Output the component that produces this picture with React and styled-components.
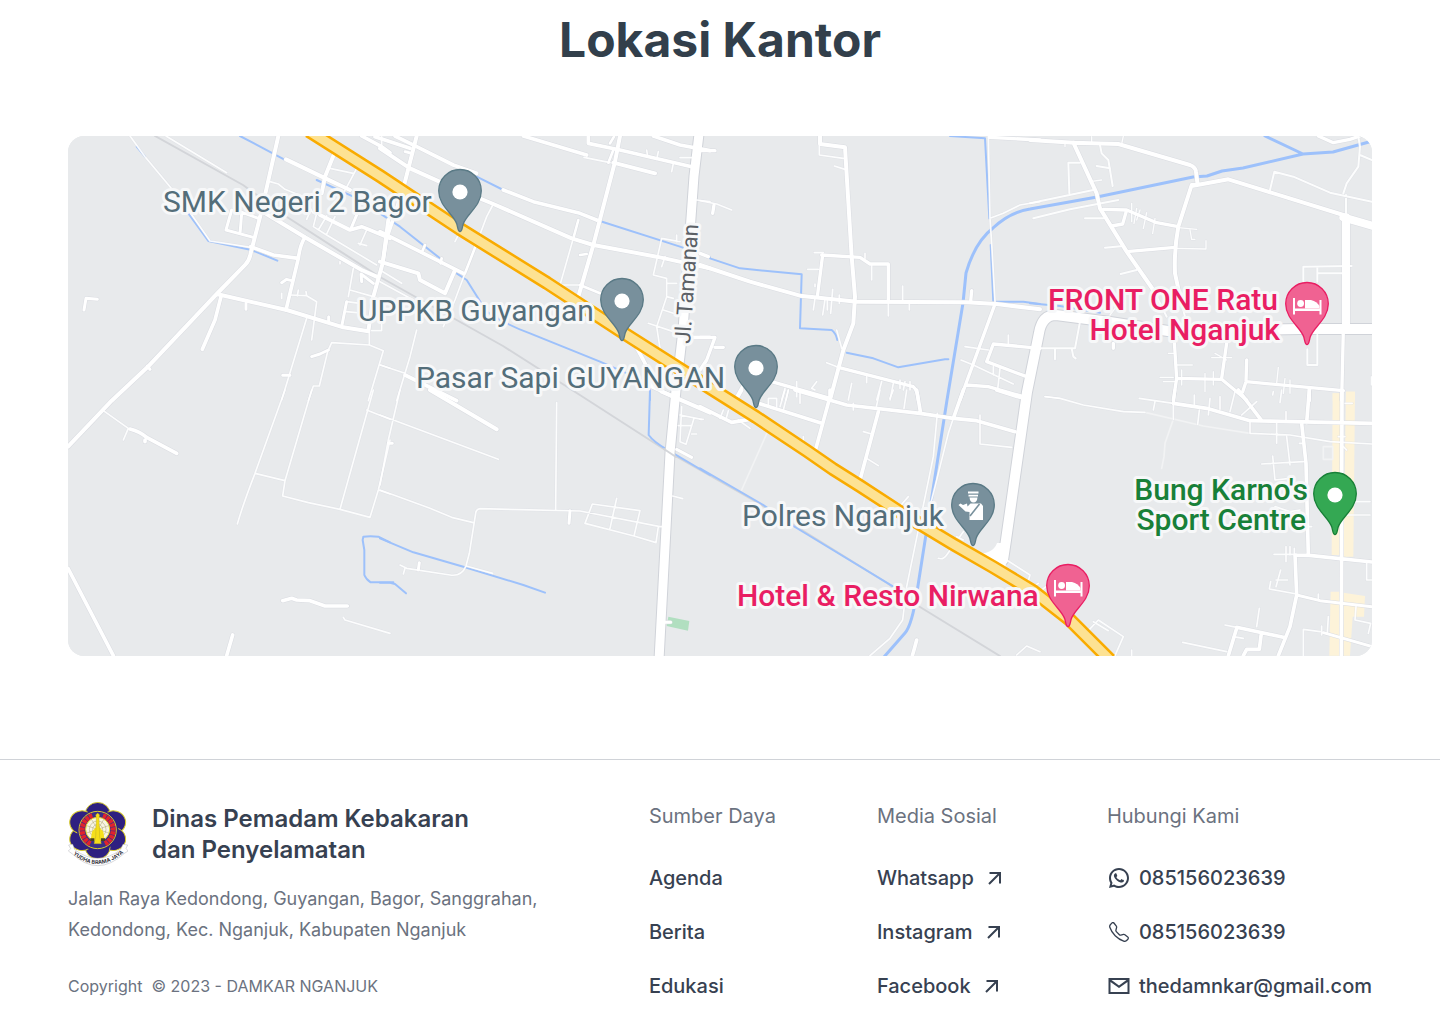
import React from "react";
import styled, { createGlobalStyle } from "styled-components";
import { RiWhatsappLine } from "react-icons/ri";
import { BsTelephone } from "react-icons/bs";

const GlobalStyle = createGlobalStyle`
  *, *::before, *::after { box-sizing: border-box; }
  body {
    margin: 0;
    background: #fff;
    color: #374151;
    font-family: Inter, "Liberation Sans", sans-serif;
  }
`;

const Office = styled.main`
  padding: 10px 68px 103px;
  @media (max-width: 800px) { padding: 10px 24px 48px; }
`;

const PageTitle = styled.h1`
  margin: 0 0 66px;
  font-size: 48px;
  line-height: 60px;
  font-weight: 700;
  text-align: center;
  color: #323f4b;
`;

const MapFrame = styled.figure`
  margin: 0;
  border-radius: 16px;
  overflow: hidden;
  background: #e8eaec;
`;

const MapDrawing = styled.svg`
  display: block;
  width: 100%;
  height: auto;
`;

const PlaceName = styled.text`
  font-family: Roboto, "Liberation Sans", sans-serif;
  font-size: ${(p) => p.$size || 30}px;
  font-weight: ${(p) => p.$weight || 400};
  fill: ${(p) => p.$color};
  stroke: #f7f8f9;
  stroke-width: 6px;
  stroke-linejoin: round;
  paint-order: stroke;
`;

const Footer = styled.footer`
  border-top: 1px solid #d0d3d8;
  padding: 40px 68px 32px;
  display: grid;
  grid-template-columns: minmax(0, 1fr) 228px 230px max-content;
  @media (max-width: 1100px) {
    grid-template-columns: repeat(2, minmax(0, 1fr));
    gap: 40px;
  }
  @media (max-width: 800px) { padding: 40px 24px 32px; }
`;

const About = styled.div`
  display: flex;
  flex-direction: column;
`;

const Brand = styled.div`
  display: flex;
  align-items: center;
  gap: 24px;
  margin-bottom: 15px;
`;

const BrandName = styled.h2`
  margin: 0;
  font-size: 24px;
  line-height: 31px;
  font-weight: 600;
`;

const Address = styled.address`
  font-style: normal;
  font-size: 18px;
  line-height: 31px;
  color: #6b7280;
  margin-bottom: 29px;
`;

const Copyright = styled.small`
  font-size: 16px;
  line-height: 24px;
  color: #6b7280;
  white-space: pre-wrap;
`;

const Column = styled.nav`
  display: flex;
  flex-direction: column;
`;

const ColumnTitle = styled.h3`
  margin: 0 0 30px;
  font-size: 20px;
  line-height: 32px;
  font-weight: 400;
  color: #6b7280;
`;

const LinkList = styled.ul`
  list-style: none;
  margin: 0;
  padding: 0;
  display: flex;
  flex-direction: column;
  gap: 22px;
`;

const FooterLink = styled.a`
  display: inline-flex;
  align-items: center;
  gap: 8px;
  font-size: 20px;
  line-height: 32px;
  font-weight: 500;
  color: inherit;
  text-decoration: none;
  svg { flex: none; }
`;

const IconBox = styled.span`
  display: inline-flex;
  align-items: center;
  justify-content: center;
  width: 24px;
  height: 24px;
`;

/* Map sheets: each is surveyed in thirds of a map unit from its own corner. */
const SHEETS = [
  {
    x: 60, y: 130,
    water: ["M385 250L445 333L575 360L652 392", "M540 18L672 88", "M770 150L880 200", "M230 50L255 80"],
    roads: [
      [12, "M655 18L600 262L572 370Q568 392 556 404L470 492L262 712L155 812L24 950M470 492L680 540L850 592L925 604M600 240L735 322L905 420L950 440M678 88L790 142L870 180M825 65L795 140L785 190M985 270L968 400L940 500L925 604"],
      [11, "M572 350L640 375L715 385M735 322Q720 345 715 385L678 540M483 500L465 570L427 658M780 255L870 300L905 290L930 300L990 325M905 18L965 50L990 68"],
      [9, "M558 520V538M515 240L498 300L580 322M540 245L595 265M545 250L540 312M890 255L872 298M665 458L680 448L695 452M755 680L780 672L805 660M668 736H690M72 540L78 505L112 508M262 708L270 718M806 560V575M905 455L903 432L940 460M860 515L845 590"],
      [5, "M210 18L255 80L330 170L385 240L450 333L572 352M318 18L500 128M810 115L880 130M893 110L850 190M630 155L655 162L675 178L730 200L760 250M770 250L760 290L800 315L950 405M825 260L800 312M800 258L775 300M752 240L740 268M665 490V505M690 495L740 497L770 515L755 630M715 480L712 498M738 485L740 497M880 415L865 500M870 480L940 500M860 515L900 520M858 545L890 548M740 565L665 810M928 604V645L815 638L803 665L778 768H760L745 812M928 645L970 662L925 812M962 705L990 715M965 18V45M920 300L900 345M895 340L920 347M840 395V402M935 602H965V570"],
    ],
  },
  {
    x: 380, y: 130,
    water: ["M290 140L370 180", "M585 248L650 270L900 350L990 382", "M0 250L60 290L180 385", "M230 430L260 450L320 545Q380 585 450 610L660 695L810 760V810"],
    roads: [
      [12, "M0 55L90 115L190 160L340 222L575 325L640 345L830 380L990 415M110 18L70 175M720 18L705 95L640 345L595 500M0 395L115 430L120 450L195 490L225 420M700 98L825 130"],
      [11, "M45 18L110 50L220 105L290 130M-15 20L90 55M370 180L460 215L600 250L650 270M430 18L520 45L620 75M625 18V40L720 60L935 110M820 18L900 45L990 62M0 305L120 365L250 430M70 175L20 325L8 400M760 635L790 690L815 740L815 770L880 800M930 622H990M75 735L230 812"],
      [8, "M75 65L95 70M700 60L685 98M690 40L702 20M290 340L255 430M595 270L580 325M600 375L620 372M600 465L660 490M135 345L125 368M185 385L182 400"],
      [5, "M340 222L320 260L290 340M255 430L225 510L190 590M240 305L225 335M580 325L540 465H600M612 82L690 98M800 60L803 80M835 65L830 88M880 100L875 125M900 83H940M950 210L990 215M845 325L820 435L860 445V500L830 590L840 655M845 325L900 335M860 460H890M860 500L880 505M850 540L880 550M805 580L880 605M855 380L845 410M0 705L75 730M110 600L90 680L50 812M0 420L65 460M0 455L100 510M990 660L970 720M890 315V335"],
    ],
  },
  {
    x: 700, y: 130,
    water: ["M30 385L120 415L305 433L300 595L395 600Q408 610 412 630", "M440 668L520 685L595 712L735 688H745", "M750 18L855 25L868 265", "M872 345L880 515H970L1020 522"],
    roads: [
      [12, "M0 405L150 455L300 497L470 515L800 517L890 522L1020 538M360 18V42L435 52L455 380L465 500L460 580L430 660L390 810"],
      [10, "M0 370L25 380M0 62H45M0 622H45L20 690L0 720M365 375L480 382L510 402H565V515M368 375L352 500M415 712L640 770Q652 780 655 810M215 755L390 805M885 522L820 700L780 810M1020 655L880 642L860 695L980 740M800 765L865 770L970 800M868 22L1020 30M42 225L38 250M130 765L105 810M815 482L812 515M45 652H70"],
      [5, "M358 45V75L430 85M403 108L435 118M565 515V558M343 368H370M323 418H355M345 505L340 540M375 508L368 555M382 510V540M398 478L392 550M418 495V520M608 468V512M628 520V540M515 405V450M495 370V385M410 600L425 655M865 18L870 265L875 340L885 515M870 265L910 250L960 225L1020 215M795 650L865 660M783 690L820 705L940 762M925 615V645M880 710V735M900 715L893 778M380 698L415 712M545 755L530 810M580 760L570 810M600 750V775M615 755L610 780M630 755V780M455 760L445 810M290 755V800M500 740V758M345 780L335 775L350 755M0 212L50 222L95 240M255 775L245 810M265 780L258 810M345 462V470"],
    ],
  },
  {
    x: 1030, y: 130,
    water: ["M0 520L90 528L210 548"],
    zones: ["M908 790H930V812H908Z", "M948 785H974V812H948Z"],
    roads: [
      [12, "M0 30L130 38L265 42L480 105Q497 112 498 125L503 165M130 38L200 190L210 235L290 365L370 480M503 165H485L445 290Q432 360 435 430L450 500M485 168L595 148L950 258"],
      [24, "M948 262V590M940 262L1026 287"],
      [10, "M220 238L290 240L380 278L445 290M290 240L278 282L245 288M290 365L435 352M865 18L910 38L960 28L990 18M940 600L935 810M250 640V655M432 620L440 745L430 810M440 745L575 748L650 810M590 640L575 745M650 690L648 755L638 785M648 755L940 782M838 775V812"],
      [6, "M370 480L410 560M450 500L465 560M210 45L215 70L235 90L248 168M200 108L240 115M150 98H115L118 190M0 220L190 180M10 265L120 238L265 210M165 265H220M225 353L280 348M272 432L320 420M720 180L733 125L790 140L900 188L1026 215M940 190L950 160L985 110L990 50L985 20M948 195V250M990 75L1026 90M820 455V410L965 408M862 410V455M862 430H945M0 655H135L150 575M125 655L130 680L137 685M75 655V688M832 658V705H862V615"],
      [4, "M440 355L528 357V332M445 293L500 298M480 300L485 328H495M305 220V275M320 235L312 280M350 248L340 295M375 265L368 310M330 240L320 270M390 742H430M400 755H435M440 705H487M415 670H433M525 730V785M550 725V765M545 683H605M555 670L590 690M745 712L740 760M765 745L760 790M780 750V790M45 800L90 805M1024 740V765M105 35V50M185 20V38M280 18L275 42M180 155L215 150M455 720V765M240 555L255 535"],
    ],
  },
  {
    x: 60, y: 390,
    water: ["M990 457L955 440Q930 437 910 440L908 450L913 480V555Q918 568 932 577H1000"],
    roads: [
      [11, "M24 535L160 797M210 117Q240 125 260 142L350 190M255 150V155M668 632L695 625L710 630L750 632L795 648H862M518 735L500 797"],
      [5, "M130 62L205 115L190 150M675 0L585 250Q550 340 532 402M755 0L675 272L668 318L745 338L840 358L930 382L955 300L990 150M585 250L675 272M940 0L840 358M920 60L990 88M955 300L990 312M850 682L855 690L990 730"],
    ],
  },
  {
    x: 380, y: 390,
    water: ["M0 445L100 487L250 530L430 585L495 608", "M0 578H30L45 582L78 610", "M810 0L806 135Q820 155 860 178L990 255"],
    parks: ["M865 680L928 693L924 722L860 708Z"],
    roads: [
      [12, "M150 0L350 118M845 5L990 68"],
      [9, "M25 160H37M118 518L115 540M570 362L567 400M855 697H872M890 178L935 202"],
      [5, "M0 75L355 208M60 0L25 150L0 285M0 300L150 355L215 382L280 398M530 38L527 358M60 525L80 535L210 555Q245 560 258 528L268 490L287 370Q288 358 300 356L600 363L840 410M75 535L70 552M258 528L338 550M637 342L780 362L762 438L615 400ZM710 325L690 415M762 438L828 458L835 410H850M905 50L900 155L918 163L942 85M900 75L965 88M895 107H935M935 132H950M878 318L908 326"],
    ],
  },
  {
    x: 700, y: 390,
    water: ["M0 235L190 345L280 408L580 590"],
    faint: ["M205 120L125 300"],
    roads: [
      [11, "M0 50L95 97L150 88M170 38L365 100M125 0L108 30M390 0V20L345 185M285 0L440 45L660 70L760 85L830 92L945 125M535 65L480 270M650 0L662 70M790 0L760 85M890 0L960 22M650 750Q645 770 637 797"],
      [5, "M760 85L745 130L690 350M490 125L515 132M500 205L535 227M540 0L528 55M265 0L250 60M255 0L240 50M300 0V40M205 45V25H230V50M580 0L570 25M620 0L612 55M840 75V162L935 172M712 70L700 200L620 590L608 690L570 745L510 797M790 425L740 495Q730 510 715 505M920 510L990 555L980 590M950 795L980 768L1020 785M625 320L595 355M70 60L60 85M85 62L78 88M115 90L150 115M310 140V160M770 440L790 450M460 40V60M0 88H10"],
    ],
  },
  {
    x: 1030, y: 390,
    zones: ["M908 10H930V495H905Z", "M948 5H975L970 500H940Z", "M902 605H930V797H898Z", "M940 608L1005 618L1002 680H968L960 797H940Z"],
    faint: ["M345 67L520 108L660 130", "M430 88L405 160L402 200L395 235", "M880 170H908V208H880Z"],
    roads: [
      [11, "M430 40L530 55L660 92L1026 100M625 0L695 92M838 0L830 98M815 100L828 220L835 495M936 0L934 797M795 495L838 496L1026 516M795 495L800 615L780 710L745 797M620 712L760 742M620 715L595 797M694 730L688 778H650L640 797"],
      [9, "M435 0L430 40M800 615L870 632L1026 650M880 728L1026 770"],
      [5, "M45 20L90 25L160 45L280 65L345 67M660 130L780 135L900 155L1026 162M328 25L430 40M430 40V88M375 35L370 60M493 15V50M540 25L535 75M508 60L503 103M570 20V58M615 5L600 65M660 92V130M680 35L635 75M740 100V160M768 65V90M770 140L780 225M695 222L820 215M728 198L735 270L780 265M732 493H800M768 470V515M780 470V495M793 475V495M718 597L800 612M718 597L722 575M752 540L738 590M738 570H773M865 612V632M585 705L620 712M688 655L680 710M458 757L590 785M610 740L640 745M820 797V718L870 725M875 708V735M895 680L892 728M978 650L975 690L1022 700L1015 730M1010 520V570H1026M940 335H1020M940 375H1020M835 410H845M945 40H967M808 160H820M735 350L780 365L810 360M175 722L205 690L280 740L255 797M190 695L235 722M305 780V797M925 140H945M940 170L950 180M730 5L728 15M755 0L750 38M10 590L25 580M35 600L48 590"],
    ],
  },
];

const RIVER = "M1376 140L1333 152L1303 154L1243 168L1222 171L1207 176L1193 177L1097 197L1030 209Q1010 212 993 228Q975 242 966 273L963 303L947 400L917 592Q912 625 905 633L884 657M1265 136L1303 154";
const RAIL = "M155 136L243 185L287 217L380 277L503 346L583 397L670 453L760 504L887 583L920 607L1000 656";
const HIGHWAY = "M309 131L380 176L460 229L547 283L622 332L710 388L756 417L807 451L833 469L860 486L900 512L953 544L993 567L1033 591L1070 620L1110 660";
const TAMANAN = "M699 134L694 176L683 330L676 390L670 453L659 660";
const RINGROAD = "M1003 560L1006 540L1027 392L1039 333Q1042 315 1056 315L1110 322L1168 331L1300 329L1376 329";

const Sheet = ({ x, y, children }) => (
  <g transform={`translate(${x} ${y}) scale(.33333)`}>{children}</g>
);

const PIN_TONES = {
  slate: ["#78909c", "#5a7a86"],
  pink: ["#f06292", "#e91e63"],
  green: ["#34a853", "#188038"],
};

function Pin({ x, y, tone, glyph }) {
  const [fill, edge] = PIN_TONES[tone];
  return (
    <g transform={`translate(${x} ${y})`}>
      <path
        d="M0-.5C-2.2-.5-2-4-3.2-8C-6.5-18-21.3-26-21.3-41.2A21.3 21.3 0 0 1 21.3-41.2C21.3-26 6.5-18 3.2-8C2-4 2.2-.5 0-.5Z"
        fill={fill} stroke={edge} strokeWidth="1.3"
      />
      {!glyph && <circle cy="-40" r="7.6" fill="#fff" />}
      {glyph === "bed" && (
        <g fill="#fff">
          <path d="M-14-47H-12V-36.5H12.5V-45H14.5V-30.5H12.5V-34H-12V-30.5H-14Z" />
          <circle cx="-6.4" cy="-41.5" r="3.4" />
          <path d="M-2-45H4Q10-43.5 12.5-39V-36.5H-2Z" />
        </g>
      )}
      {glyph === "officer" && (
        <g>
          <g fill="#fff">
            <path d="M-5-54.5H5.5V-52.5H-5ZM-4.5-51.3H5V-49.5H-4.5Z" />
            <path d="M-3.5-48.5H4.5Q4-43.5 .5-43.5T-3.5-48.5Z" />
            <path d="M-2.5-42.5H8L10-40V-26H-3.5V-34L-7.5-34.6L-14.5-41L-12.5-42.5L-10-41L-6-42.5L-5.5-39.5Z" />
          </g>
          <path d="M6.5-42L-3-30" stroke={fill} strokeWidth="1.6" />
        </g>
      )}
    </g>
  );
}

const SLATE = "#546e7a";
const PINK = "#e91e63";
const GREEN = "#188038";

function OfficeMap() {
  return (
    <MapDrawing viewBox="68 136 1304 520" role="img" aria-label="Peta lokasi kantor">
      <rect x="68" y="136" width="1304" height="520" fill="#e8eaec" />
      {SHEETS.map((s) => (
        <Sheet key={`land${s.x}-${s.y}`} x={s.x} y={s.y}>
          {(s.zones || []).map((d) => <path key={d} d={d} fill="#fdf3d9" />)}
          {(s.parks || []).map((d) => <path key={d} d={d} fill="#b1dfc0" />)}
        </Sheet>
      ))}
      <g fill="none" strokeLinecap="round" strokeLinejoin="round">
        <path d={RAIL} stroke="#d3d5d9" strokeWidth="2" />
        {SHEETS.map((s) => (
          <Sheet key={`water${s.x}-${s.y}`} x={s.x} y={s.y}>
            {(s.water || []).map((d) => <path key={d} d={d} stroke="#9dc1fb" strokeWidth="6" />)}
            {(s.faint || []).map((d) => <path key={d} d={d} stroke="#f2f3f4" strokeWidth="5" />)}
          </Sheet>
        ))}
        <path d={RIVER} stroke="#9dc1fb" strokeWidth="3" />
        {SHEETS.map((s) => (
          <Sheet key={`edge${s.x}-${s.y}`} x={s.x} y={s.y}>
            {s.roads.map(([w, d]) => <path key={d} d={d} stroke="#d8dae0" strokeWidth={w + 3} opacity={w < 7 ? 0.4 : 0.9} />)}
          </Sheet>
        ))}
        <path d={TAMANAN} stroke="#d0d3d9" strokeWidth="11" />
        <path d={RINGROAD} stroke="#d0d3d9" strokeWidth="12" />
        {SHEETS.map((s) => (
          <Sheet key={`road${s.x}-${s.y}`} x={s.x} y={s.y}>
            {s.roads.map(([w, d]) => <path key={d} d={d} stroke="#fff" strokeWidth={w} opacity={w < 7 ? 0.9 : 1} />)}
          </Sheet>
        ))}
        <path d={TAMANAN} stroke="#fff" strokeWidth="9" />
        <path d={RINGROAD} stroke="#fff" strokeWidth="10" />
        <path d="M978 554Q994 553 997 543L1008 543L1005 572Z" fill="#fff" />
        <path d="M664 449L676 457" stroke="#d3d5d9" strokeWidth="2" />
        <path d={HIGHWAY} stroke="#f9ab00" strokeWidth="14" strokeLinecap="butt" />
        <path d={HIGHWAY} stroke="#fde293" strokeWidth="9" strokeLinecap="butt" />
      </g>
      <PlaceName x="163" y="212" $color={SLATE}>SMK Negeri 2 Bagor</PlaceName>
      <PlaceName x="358" y="321" $color={SLATE}>UPPKB Guyangan</PlaceName>
      <PlaceName x="416" y="388" $color={SLATE}>Pasar Sapi GUYANGAN</PlaceName>
      <PlaceName x="742" y="526" $color={SLATE}>Polres Nganjuk</PlaceName>
      <PlaceName x="737" y="606" $color={PINK} $weight={500}>Hotel &amp; Resto Nirwana</PlaceName>
      <PlaceName textAnchor="end" $color={PINK} $weight={500}>
        <tspan x="1278" y="310">FRONT ONE Ratu</tspan>
        <tspan x="1280" y="340">Hotel Nganjuk</tspan>
      </PlaceName>
      <PlaceName textAnchor="end" $color={GREEN} $weight={500}>
        <tspan x="1308" y="500">Bung Karno's</tspan>
        <tspan x="1306" y="530">Sport Centre</tspan>
      </PlaceName>
      <PlaceName transform="translate(690 344) rotate(-86)" $size={22} $color="#5b6066">Jl. Tamanan</PlaceName>
      <Pin x="460" y="232" tone="slate" />
      <Pin x="622" y="341" tone="slate" />
      <Pin x="756" y="408" tone="slate" />
      <Pin x="973" y="546" tone="slate" glyph="officer" />
      <Pin x="1307" y="345" tone="pink" glyph="bed" />
      <Pin x="1335" y="535" tone="green" />
      <Pin x="1068" y="627" tone="pink" glyph="bed" />
    </MapDrawing>
  );
}

const PETALS = [0, 60, 120, 180, 240, 300];

function Emblem() {
  return (
    <svg width="60" height="68" viewBox="24 29 180 204" role="img" aria-label="Yudha Brama Jaya">
      <g fill="#2e2080" stroke="#d9cc2a" strokeWidth="3" transform="translate(113 121) scale(1 .93)">
        {PETALS.map((a) => (
          <circle key={a} cy="-54" r="37" transform={`rotate(${a})`} />
        ))}
      </g>
      <circle cx="113" cy="120" r="62" fill="#2e2080" />
      <circle cx="113" cy="119" r="56" fill="#3a2f86" stroke="#d9cc2a" strokeWidth="3" />
      <path d="M91 160A46 46 0 0 1 97 76M135 160A46 46 0 0 0 129 76" fill="none" stroke="#e0222c" strokeWidth="15" strokeDasharray="10 2" />
      <circle cx="113" cy="117" r="36" fill="#f7f4e4" stroke="#e8d820" strokeWidth="3" />
      <g fill="none" stroke="#aaa36f" strokeWidth="1.5">
        <circle cx="113" cy="117" r="25" />
        <circle cx="113" cy="117" r="15" />
        <path d="M80 106L146 128M80 128L146 106M95 88L131 146M131 88L95 146" />
      </g>
      <path d="M96 124L113 104L130 124L134 150H92Z" fill="#f5e01c" />
      <path d="M107 74L113 68L119 74L117 84L119 140L124 160H102L107 140L109 84Z" fill="#f5de18" stroke="#a8952a" strokeWidth="1" />
      <path d="M91 144H103V152H91ZM123 144H135V152H123Z" fill="#4a4020" />
      <path d="M26 164L38 162L44 178Q113 230 182 178L189 162L203 164L198 174L204 182L192 190Q113 262 36 190L25 182L32 175Z" fill="#fff" stroke="#b4b4ba" strokeWidth="1.5" />
      <path id="motto" d="M38 191Q113 253 192 187" fill="none" />
      <text fontFamily="Inter, sans-serif" fontSize="16" fontWeight="700" fill="#35343c" textAnchor="middle">
        <textPath href="#motto" startOffset="50%">YUDHA BRAMA JAYA</textPath>
      </text>
    </svg>
  );
}

const ArrowOut = () => (
  <svg width="24" height="24" viewBox="0 0 24 24" fill="none" stroke="currentColor" strokeWidth="2" aria-hidden="true">
    <path d="M7.5 7H18V17.5M18 7L7 18" />
  </svg>
);

const MailIcon = () => (
  <svg width="24" height="24" viewBox="0 0 24 24" fill="currentColor" aria-hidden="true">
    <path d="M22.500 4h-21v16h21V4zm-2 14h-17V8l8.500 6 8.500-6v10zm-8.500-6.500L4.500 6h15l-7.500 5.500z" />
  </svg>
);

const RESOURCES = ["Agenda", "Berita", "Edukasi"];
const SOCIALS = ["Whatsapp", "Instagram", "Facebook"];
const CONTACTS = [
  { label: "085156023639", href: "https://wa.me/6285156023639", icon: <RiWhatsappLine size={24} /> },
  { label: "085156023639", href: "tel:085156023639", icon: <BsTelephone size={20} /> },
  { label: "thedamnkar@gmail.com", href: "mailto:thedamnkar@gmail.com", icon: <MailIcon /> },
];

export default function App() {
  return (
    <>
      <GlobalStyle />
      <Office>
        <PageTitle>Lokasi Kantor</PageTitle>
        <MapFrame><OfficeMap /></MapFrame>
      </Office>
      <Footer>
        <About>
          <Brand>
            <Emblem />
            <BrandName>Dinas Pemadam Kebakaran<br />dan Penyelamatan</BrandName>
          </Brand>
          <Address>
            Jalan Raya Kedondong, Guyangan, Bagor, Sanggrahan,<br />
            Kedondong, Kec. Nganjuk, Kabupaten Nganjuk
          </Address>
          <Copyright>{"Copyright  © 2023 - DAMKAR NGANJUK"}</Copyright>
        </About>
        <Column aria-label="Sumber Daya">
          <ColumnTitle>Sumber Daya</ColumnTitle>
          <LinkList>
            {RESOURCES.map((name) => (
              <li key={name}><FooterLink href={`#${name.toLowerCase()}`}>{name}</FooterLink></li>
            ))}
          </LinkList>
        </Column>
        <Column aria-label="Media Sosial">
          <ColumnTitle>Media Sosial</ColumnTitle>
          <LinkList>
            {SOCIALS.map((name) => (
              <li key={name}>
                <FooterLink href={`https://${name.toLowerCase()}.com`}>{name}<ArrowOut /></FooterLink>
              </li>
            ))}
          </LinkList>
        </Column>
        <Column aria-label="Hubungi Kami">
          <ColumnTitle>Hubungi Kami</ColumnTitle>
          <LinkList>
            {CONTACTS.map((c) => (
              <li key={c.href}>
                <FooterLink href={c.href}><IconBox>{c.icon}</IconBox>{c.label}</FooterLink>
              </li>
            ))}
          </LinkList>
        </Column>
      </Footer>
    </>
  );
}
